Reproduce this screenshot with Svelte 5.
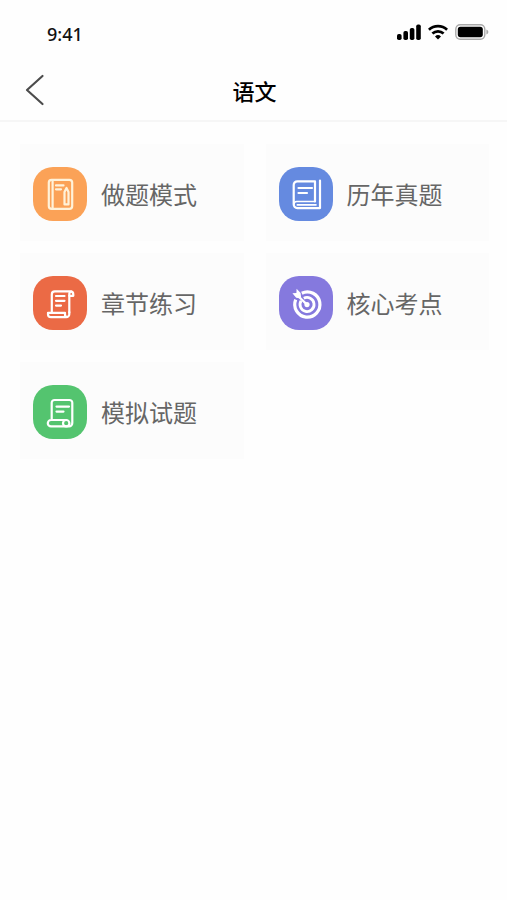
<script>
  const modes = [
    { id: 'practice', label: '做题模式', color: '#fba257' },
    { id: 'past', label: '历年真题', color: '#658ae0' },
    { id: 'chapter', label: '章节练习', color: '#eb6a45' },
    { id: 'core', label: '核心考点', color: '#8579de' },
    { id: 'mock', label: '模拟试题', color: '#54c46f' }
  ];
</script>

<div class="screen">
  <div class="status">
    <span class="time">9:41</span>
    <div class="signals">
      <svg width="24" height="16" viewBox="0 0 24 16" aria-hidden="true">
        <rect x="0" y="10" width="4.6" height="6" rx="1.8" />
        <rect x="6.4" y="7" width="4.6" height="9" rx="1.8" />
        <rect x="12.8" y="4" width="4.6" height="12" rx="1.8" />
        <rect x="19.2" y="0.5" width="4.6" height="15.5" rx="1.8" />
      </svg>
      <svg width="20" height="16" viewBox="0 0 20 16" aria-hidden="true">
        <g fill="none" stroke="#000" stroke-width="2.7">
          <path d="M0.9 5.7a13.2 13.2 0 0 1 18.2 0" />
          <path d="M4.4 9.5a8.2 8.2 0 0 1 11.2 0" />
        </g>
        <path d="M10 15.6l-3-3.1a4.4 4.4 0 0 1 6 0z" />
      </svg>
      <svg width="34" height="16" viewBox="0 0 34 16" aria-hidden="true">
        <rect x="0.8" y="0.8" width="29" height="14.4" rx="4.4" fill="none" stroke="#a9a9a9" stroke-width="1.4" />
        <rect x="2.8" y="2.8" width="25" height="10.4" rx="2.6" />
        <path d="M31.4 5.6q2 .8 2 2.4t-2 2.4z" fill="#a9a9a9" />
      </svg>
    </div>
  </div>

  <header>
    <button class="back" aria-label="返回">
      <svg width="20" height="32" viewBox="0 0 20 32" aria-hidden="true">
        <path d="M17.5 2L2 16l15.5 14" fill="none" stroke="#4c4c4c" stroke-width="2.2" stroke-linecap="round" stroke-linejoin="round" />
      </svg>
    </button>
    <h1>语文</h1>
  </header>

  <main>
    {#each modes as mode (mode.id)}
      <button class="card">
        <span class="tile" style="background: {mode.color}">
          <svg viewBox="0 0 54 54" aria-hidden="true">
            {#if mode.id === 'practice'}
              <g stroke="#fff2d9">
                <rect x="15.8" y="12.8" width="23.4" height="29" rx="2.8" />
                <path d="M19.6 13v28.6M23 18.4h7.5M23 22.3h5" />
                <path d="M33.5 21l-2 4v12.4h4V25z" />
              </g>
            {:else if mode.id === 'past'}
              <path d="M36 34.5V14.3H18.3a3.6 3.6 0 0 0-3.6 3.6v19.5a3.6 3.6 0 0 0 3.6 3.7H41V13.5" />
              <path d="M14.8 37.4a3.2 3.2 0 0 1 3.4-2.9H36M18.3 37.9H37" stroke-width="1.6" />
              <path d="M19.5 21H33M19.5 26h8.5" />
            {:else if mode.id === 'chapter'}
              <path d="M18.8 36.6V18.4a3 3 0 0 1 3-3h15.5a3 3 0 0 1 3 3v1.4h-4V36.6" />
              <path d="M36.3 19.8v-1.6a2.6 2.6 0 0 1 2-2.7" />
              <path d="M32 36.8H15v1.4a3 3 0 0 0 3 3h15.300a3 3 0 0 0 3-3v-2M32 36.8v1.5a2.500 2.500 0 0 0 2 2.700" />
              <path d="M23 20h8.500M23 24.800h8.500M23 29.600h5" />
            {:else if mode.id === 'core'}
              <path d="M16.700 23.700A12.600 12.600 0 1 0 22.800 17.200" stroke-width="3.200" stroke-linecap="butt" />
              <path d="M22.100 24.800A7 7 0 1 0 24.800 22.300" stroke-width="2.800" stroke-linecap="butt" />
              <circle cx="28" cy="28.600" r="2.600" fill="#fff" stroke="none" />
              <path d="M17.500 18.500L28 28.600" stroke-width="2.200" />
              <path d="M13.400 17.300l4-.2.200-4.300 4 4.200.6 5.500-5-.8z" fill="#fff" stroke="none" />
            {:else}
              <path d="M18.700 35V17.800a2.800 2.800 0 0 1 2.800-2.800h15a2.800 2.800 0 0 1 2.800 2.800v20.300a3.300 3.300 0 0 1-3.300 3.300H18a3.200 3.200 0 0 1 0-6.400h15" />
              <circle cx="33.200" cy="38.200" r="3.200" />
              <path d="M23.500 21.600H36M23.500 26.600h7" />
            {/if}
          </svg>
        </span>
        <span class="label">{mode.label}</span>
      </button>
    {/each}
  </main>
</div>

<style>
  :global(body) {
    margin: 0;
    background: #fefefe;
  }

  .screen {
    min-height: 100vh;
    font-family: 'Noto Sans', 'Noto Sans CJK SC', sans-serif;
    color: #111;
  }

  .status {
    display: flex;
    align-items: center;
    justify-content: space-between;
    height: 60px;
    padding: 6px 18px 0 47px;
    box-sizing: border-box;
  }

  .time {
    padding-top: 2px;
    font-size: 18px;
    line-height: 24px;
    font-weight: 500;
  }

  .signals {
    display: flex;
    gap: 7px;
    padding-bottom: 2px;
  }

  svg {
    display: block;
  }

  header {
    display: grid;
    grid-template-columns: 72px 1fr 70px;
    align-items: center;
    height: 62px;
    box-sizing: border-box;
    border-bottom: 2px solid #f6f6f6;
  }

  button {
    border: 0;
    font: inherit;
    cursor: pointer;
  }

  .back {
    justify-self: start;
    padding: 4px 8px 4px 25px;
    background: none;
  }

  h1 {
    margin: 0;
    text-align: center;
    font-family: 'Noto Sans CJK SC', sans-serif;
    font-size: 22px;
    line-height: 32px;
    font-weight: 500;
    color: #000;
  }

  main {
    display: grid;
    grid-template-columns: 1fr 1fr;
    gap: 12px 22px;
    padding: 22px 18px 22px 20px;
  }

  .card {
    display: flex;
    align-items: center;
    gap: 14px;
    height: 97px;
    padding: 3px 13px 0;
    background: #fcfcfc;
    text-align: left;
  }

  .tile {
    flex: none;
    width: 54px;
    height: 54px;
    border-radius: 20px;
  }

  .tile svg {
    fill: none;
    stroke: #fff;
    stroke-width: 2.2;
    stroke-linecap: round;
    stroke-linejoin: round;
  }

  .label {
    font-family: 'Noto Sans CJK SC', sans-serif;
    font-size: 24px;
    line-height: 36px;
    color: #666;
  }
</style>
